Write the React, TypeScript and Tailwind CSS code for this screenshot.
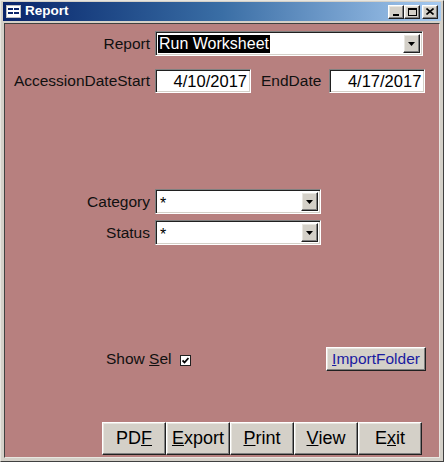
import React from 'react';

const FONT = { fontFamily: '"Liberation Sans", Arial, sans-serif' };

const sunken =
  'border border-t-[#808080] border-l-[#808080] border-b-white border-r-white shadow-[inset_1px_1px_0_#202020,inset_-1px_-1px_0_#d4d0c8]';
const raised =
  'border border-t-white border-l-white border-b-[#202020] border-r-[#202020] shadow-[inset_-1px_-1px_0_#808080,inset_1px_1px_0_#e8e6e0]';

const DropButton: React.FC = () => (
  <div className={`w-[17px] self-stretch bg-[#d4d0c8] flex items-center justify-center ${raised}`}>
    <svg width="7" height="4" viewBox="0 0 7 4">
      <path d="M0 0h7L3.5 4z" fill="#000" />
    </svg>
  </div>
);

const Combo: React.FC<{ width: string; children: React.ReactNode }> = ({ width, children }) => (
  <div className={`${width} h-[25px] bg-white flex items-stretch p-[2px] ${sunken}`}>
    <div className="flex-1 flex items-center text-[16px] text-black leading-none overflow-hidden">{children}</div>
    <DropButton />
  </div>
);

const Btn: React.FC<{ children: React.ReactNode }> = ({ children }) => (
  <div className={`w-[64px] h-[33px] bg-[#d4d0c8] flex items-center justify-center text-[18px] text-black ${raised}`}>
    {children}
  </div>
);

const App: React.FC = () => {
  return (
    <div style={FONT} className="w-[444px] h-[462px] bg-[#d4d0c8] flex flex-col border border-t-[#e8e6e0] border-l-[#e8e6e0] border-b-[#404040] border-r-[#404040] overflow-hidden">
      {/* Title bar */}
      <div className="mx-[2px] mt-[1px] h-[19px] bg-gradient-to-r from-[#0a246a] via-[#3a6ea5] to-[#a6caf0] flex items-center pl-[3px] pr-[3px]">
        <svg width="15" height="13" viewBox="0 0 15 13" className="mr-[4px]">
          <rect x="0.5" y="0.5" width="14" height="12" fill="#fff" stroke="#c0c0c0" />
          <rect x="2" y="3" width="5" height="2" fill="#0a246a" />
          <rect x="8" y="3" width="5" height="2" fill="#0a246a" />
          <rect x="2" y="7" width="5" height="2" fill="#0a246a" />
          <rect x="8" y="7" width="5" height="2" fill="#0a246a" />
        </svg>
        <span className="text-white font-bold text-[13.5px]">Report</span>
        <div className="ml-auto flex items-center">
          <div className={`w-[16px] h-[14px] bg-[#d4d0c8] flex items-end justify-center pb-[2px] ${raised}`}>
            <div className="w-[6px] h-[2px] bg-black" />
          </div>
          <div className={`w-[16px] h-[14px] bg-[#d4d0c8] flex items-center justify-center ${raised}`}>
            <div className="w-[9px] h-[8px] border border-black border-t-2" />
          </div>
          <div className={`ml-[2px] w-[16px] h-[14px] bg-[#d4d0c8] flex items-center justify-center ${raised}`}>
            <svg width="8" height="7" viewBox="0 0 8 7">
              <path d="M0.5 0.5L7.5 6.5M7.5 0.5L0.5 6.5" stroke="#000" strokeWidth="1.6" />
            </svg>
          </div>
        </div>
      </div>

      {/* Form body */}
      <div className="mx-[3px] mt-[2px] mb-[3px] flex-1 flex flex-col bg-[#b7807f] border border-t-[#404040] border-l-[#404040] border-b-[#e8e6e0] border-r-[#e8e6e0] text-[#101010]">
        <div className="flex items-center mt-[7px]">
          <div className="w-[145px] text-right text-[15.5px]">Report</div>
          <div className="ml-[5px]">
            <Combo width="w-[268px]">
              <span className="bg-black text-white px-[1px] py-[1px]">Run Worksheet</span>
            </Combo>
          </div>
        </div>

        <div className="flex items-center mt-[13px]">
          <div className="w-[145px] text-right text-[15.5px]">AccessionDateStart</div>
          <div className={`ml-[5px] w-[96px] h-[24px] bg-white flex items-center justify-end pr-[3px] text-[16.5px] text-black ${sunken}`}>4/10/2017</div>
          <div className="ml-[10px] text-[15.5px]">EndDate</div>
          <div className={`ml-[8px] w-[96px] h-[24px] bg-white flex items-center justify-end pr-[3px] text-[16.5px] text-black ${sunken}`}>4/17/2017</div>
        </div>

        <div className="flex items-center mt-[96px]">
          <div className="w-[145px] text-right text-[15.5px]">Category</div>
          <div className="ml-[5px]">
            <Combo width="w-[166px]">
              <span className="pl-[2px] pt-[4px]">*</span>
            </Combo>
          </div>
        </div>

        <div className="flex items-center mt-[6px]">
          <div className="w-[145px] text-right text-[15.5px]">Status</div>
          <div className="ml-[5px]">
            <Combo width="w-[166px]">
              <span className="pl-[2px] pt-[4px]">*</span>
            </Combo>
          </div>
        </div>

        <div className="flex items-center mt-[102px]">
          <div className="ml-[101px] text-[15.5px]">
            Show <span className="underline">S</span>el
          </div>
          <div className="ml-[8px] mt-[2px] w-[11px] h-[11px] bg-white border border-[#202020] flex items-center justify-center">
            <svg width="7" height="7" viewBox="0 0 7 7">
              <path d="M0.5 3.5L2.5 5.5L6.5 1" stroke="#000" strokeWidth="1.8" fill="none" />
            </svg>
          </div>
          <div className={`ml-auto mr-[13px] w-[100px] h-[24px] bg-[#d4d0c8] flex items-center justify-center text-[15.5px] text-[#1a1aa0] ${raised}`}>
            <span className="underline">I</span>mportFolder
          </div>
        </div>

        <div className="flex mt-[51px] ml-[97px]">
          <Btn>PD<span className="underline">F</span></Btn>
          <Btn><span className="underline">E</span>xport</Btn>
          <Btn><span className="underline">P</span>rint</Btn>
          <Btn><span className="underline">V</span>iew</Btn>
          <Btn>E<span className="underline">x</span>it</Btn>
        </div>
      </div>
    </div>
  );
};

export default App;
